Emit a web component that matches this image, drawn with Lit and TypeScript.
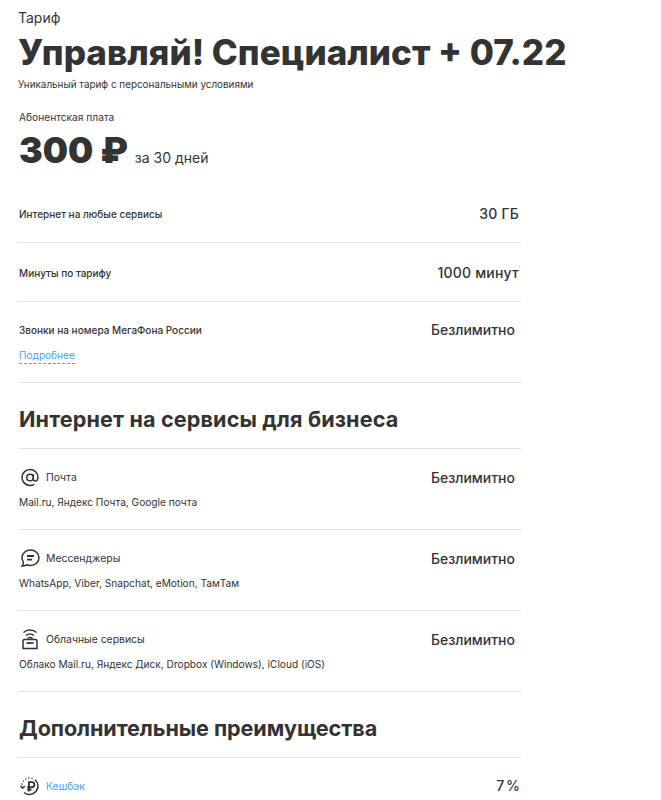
import { LitElement, html, css, svg } from 'lit';
import { customElement } from 'lit/decorators.js';

const icons = {
  mail: svg`<circle cx="10" cy="9.500" r="3.300"/><path d="M13.300 6v4.700c0 1.500.9 2.300 2 2.300 1.500 0 2.600-1.500 2.600-3.700C17.900 4.900 14.400 1.500 10 1.500c-4.400 0-8 3.600-8 8s3.600 8 8 8c1.600 0 3-.4 4.200-1.100"/>`,
  chat: svg`<path d="M10.500 1C5.800 1 2 4.500 2 8.800c0 1.600.5 3 1.400 4.300.2 1.500-.4 3-1.400 4 1.800.1 3.500-.4 4.800-1.400 1.100.5 2.400.8 3.700.8 4.700 0 8.500-3.500 8.500-7.800S15.200 1 10.500 1z"/><path d="M7 7h7M7 10.600h5" stroke-width="1.800"/>`,
  cloud: svg`<path d="M3.500 2.500C7-.8 13-.8 16.500 2.500M6 5.500c2.300-2 5.700-2 8 0M7.500 8.300c1.500-1 3.500-1 5 0"/><path d="M3 18.500v-7.500c0-.9.6-1.500 1.500-1.500h11c.9 0 1.500.6 1.500 1.500v7.500z"/><path d="M6.500 13h7" stroke-width="1.800"/>`,
  cashback: svg`<path d="M15 2.700A8.300 8.300 0 1 1 4 15.500"/><path d="M1.800 7.500A8.300 8.300 0 0 1 12.500 1.500" stroke-dasharray="1 2.200"/><path d="M.6 8.800l1.900 2.400 2.200-2.300"/><path d="M9 14.500V5.200h2.900a2.500 2.500 0 0 1 0 5H7.200M7.200 12.500h4.300" stroke-width="1.800"/>`,
};

@customElement('app-root')
export class AppRoot extends LitElement {
  static styles = css`
    :host {
      display: block;
      height: 800px;
      overflow: hidden;
      background: #fff;
      color: #333;
      font-family: Inter, "Liberation Sans", sans-serif;
    }
    .page {
      width: 503px;
      margin-left: 18px;
    }
    .kicker {
      font-size: 14px;
      line-height: 18px;
      padding-top: 9px;
    }
    h1 {
      margin: 4px 0 0;
      font-size: 35px;
      line-height: 42px;
      font-weight: 800;
      white-space: nowrap;
    }
    .note {
      font-size: 9.900px;
      line-height: 14px;
      margin-top: 4px;
    }
    .fee-label {
      font-size: 10.200px;
      line-height: 14px;
      margin-top: 19px;
      padding-left: 1px;
    }
    .price {
      display: flex;
      align-items: baseline;
      gap: 7px;
      margin: 5px 0 11px;
      height: 44px;
    }
    .amount {
      font-size: 35.500px;
      line-height: 44px;
      font-weight: 900;
      padding-left: 1px;
    }
    .per {
      font-size: 14px;
    }
    .row {
      display: flex;
      justify-content: space-between;
      border-bottom: 1px solid #e2e2e2;
      box-sizing: border-box;
    }
    .row.plain {
      height: 59px;
      padding-top: 1px;
      align-items: center;
    }
    .row.plain .value {
      letter-spacing: 0.2px;
    }
    .name {
      font-size: 10px;
      line-height: 14px;
      font-weight: 500;
      padding-left: 1px;
    }
    .value {
      font-size: 14px;
      line-height: 18px;
      font-weight: 500;
      padding-right: 2px;
    }
    .value.end {
      padding-right: 6px;
    }
    .row.top {
      padding-top: 21px;
      height: 81px;
    }
    .row.top .value {
      margin-top: -2px;
    }
    .more {
      display: inline-block;
      margin: 11px 0 0 1px;
      padding-bottom: 1px;
      font-size: 10.100px;
      line-height: 14px;
      color: #4c9fe8;
      border-bottom: 1px dashed #4c9fe8;
    }
    h2 {
      margin: 0;
      font-size: 21.600px;
      line-height: 26px;
      font-weight: 700;
      padding: 23px 0 16px 1px;
      border-bottom: 1px solid #e2e2e2;
    }
    h2.wide {
      letter-spacing: 0.13px;
    }
    h2.tight {
      letter-spacing: -0.1px;
    }
    .service {
      box-sizing: border-box;
      height: 81px;
      padding-top: 22px;
      display: flex;
      justify-content: space-between;
      align-items: flex-start;
      border-bottom: 1px solid #e2e2e2;
    }
    .svc-head {
      display: flex;
      align-items: center;
      gap: 6px;
      padding-left: 2px;
    }
    .svc-head svg {
      width: 20px;
      height: 20px;
      margin: -3px 0;
      flex: none;
      fill: none;
      stroke: #333;
      stroke-width: 1.500;
      overflow: visible;
    }
    .svc-head .name {
      font-size: 10.400px;
      font-weight: 400;
      padding-left: 0;
    }
    .svc-head .link {
      color: #4c9fe8;
    }
    .svc-sub {
      font-size: 10.150px;
      line-height: 14px;
      margin-top: 10px;
      padding-left: 1px;
    }
    .service .value {
      margin-top: -2px;
    }
    .service .pct {
      margin-top: -3px;
      padding-right: 1px;
      word-spacing: -2px;
    }
  `;

  service(icon: keyof typeof icons, name: string, sub: string) {
    return html`
      <div class="service">
        <div>
          <div class="svc-head">
            <svg viewBox="0 0 20 20">${icons[icon]}</svg>
            <span class="name">${name}</span>
          </div>
          <div class="svc-sub">${sub}</div>
        </div>
        <div class="value end">Безлимитно</div>
      </div>
    `;
  }

  render() {
    return html`
      <div class="page">
        <div class="kicker">Тариф</div>
        <h1>Управляй! Специалист + 07.22</h1>
        <div class="note">Уникальный тариф с персональными условиями</div>
        <div class="fee-label">Абонентская плата</div>
        <div class="price">
          <span class="amount">300 ₽</span>
          <span class="per">за 30 дней</span>
        </div>

        <div class="row plain">
          <span class="name">Интернет на любые сервисы</span>
          <span class="value">30 ГБ</span>
        </div>
        <div class="row plain">
          <span class="name">Минуты по тарифу</span>
          <span class="value">1000 минут</span>
        </div>
        <div class="row top">
          <div>
            <div class="name">Звонки на номера МегаФона России</div>
            <a class="more">Подробнее</a>
          </div>
          <span class="value end">Безлимитно</span>
        </div>

        <h2 class="wide">Интернет на сервисы для бизнеса</h2>
        ${this.service('mail', 'Почта', 'Mail.ru, Яндекс Почта, Google почта')}
        ${this.service('chat', 'Мессенджеры', 'WhatsApp, Viber, Snapchat, eMotion, ТамТам')}
        ${this.service('cloud', 'Облачные сервисы', 'Облако Mail.ru, Яндекс Диск, Dropbox (Windows), iCloud (iOS)')}

        <h2 class="tight">Дополнительные преимущества</h2>
        <div class="service">
          <div class="svc-head">
            <svg viewBox="0 0 20 20">${icons.cashback}</svg>
            <span class="name link">Кешбэк</span>
          </div>
          <div class="value pct">7 %</div>
        </div>
      </div>
    `;
  }
}
